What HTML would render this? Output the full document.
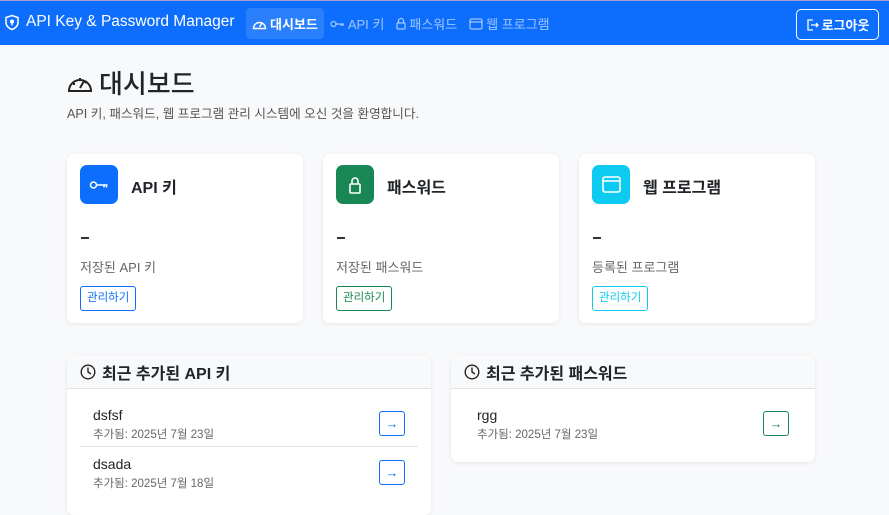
<!DOCTYPE html>
<html><head><meta charset="utf-8">
<style>
*{box-sizing:border-box;margin:0;padding:0}
body{width:889px;height:504px;overflow:hidden;background:#f8f9fa;font-family:"Liberation Sans","Noto Sans CJK KR",sans-serif;color:#212529}
.nav{height:45px;background:#0d6efd;position:relative;color:#fff;border-top:1px solid #a99ad6}
.brand{position:absolute;left:4px;top:12px;font-size:15.5px;display:flex;align-items:center;gap:6px}
.links{position:absolute;left:246px;top:7px;display:flex;font-size:13px}
.links a{display:flex;align-items:center;gap:3px;padding:0 6px;height:31px;color:rgba(255,255,255,.6);text-decoration:none}
.links a.act{background:rgba(255,255,255,.12);color:#fff;font-weight:bold;border-radius:4px;padding:0 6px}
.logout{position:absolute;right:10px;top:8px;width:83px;height:31px;border:1px solid #fff;border-radius:5px;font-size:13px;font-weight:bold;display:flex;align-items:center;justify-content:center;gap:3px}
h1{position:absolute;left:67px;top:64px;font-size:26px;font-weight:500;display:flex;align-items:center;gap:6px}
.sub{position:absolute;left:67px;top:103px;font-size:12.6px;color:#555}
.card{position:absolute;top:154px;width:236px;height:169px;background:#fff;border-radius:7px;box-shadow:0 1px 4px rgba(0,0,0,.08)}
.ic{position:absolute;left:13px;top:11px;width:38px;height:39px;border-radius:7px;display:flex;align-items:center;justify-content:center}
.ct{position:absolute;left:64px;top:20px;font-size:16px;font-weight:bold}
.dash{position:absolute;left:14px;top:83px;width:8px;height:2px;background:#333}
.cl{position:absolute;left:13px;top:103px;font-size:13px;color:#666}
.btn{position:absolute;left:13px;top:132px;height:25px;padding:0 6px;border:1px solid;border-radius:3px;font-size:11.5px;line-height:23px}
.sec{position:absolute;top:355px;width:364px;background:#fff;border-radius:7px;box-shadow:0 1px 4px rgba(0,0,0,.08);overflow:hidden}
.sh{height:34px;background:#f8f9fa;border-bottom:1px solid #dee2e6;font-size:16px;font-weight:bold;display:flex;align-items:center;gap:6px;padding-left:13px}
.it{height:49px;margin:0 13px;position:relative;border-bottom:1px solid #dee2e6}
.it .n{position:absolute;left:13px;top:9px;font-size:14px}
.it .d{position:absolute;left:13px;top:28px;font-size:11.5px;color:#666}
.it .b{position:absolute;right:13px;top:13px;width:26px;height:25px;border:1px solid;border-radius:3px;display:flex;align-items:center;justify-content:center;font-size:13px}
</style></head><body>
<div class="nav">
<div class="brand"><svg width="16" height="17" viewBox="0 0 16 17" fill="none" stroke="#fff" stroke-width="1.5"><path d="M8 1.5L2 3.5v5c0 3.5 3 6 6 7 3-1 6-3.5 6-7v-5z"/><circle cx="8" cy="7.5" r="1.3" fill="#fff"/><path d="M8 8.5v3"/></svg>API Key &amp; Password Manager</div>
<div class="links">
<a class="act"><svg width="15" height="12" viewBox="0 0 15 12" fill="none" stroke="#fff" stroke-width="1.4"><path d="M1.5 10.5a6 6 0 1 1 12 0z"/><path d="M7.5 9l2.5-4"/></svg>대시보드</a>
<a><svg width="15" height="8" viewBox="0 0 15 8" fill="none" stroke="rgba(255,255,255,.6)" stroke-width="1.3"><circle cx="3.5" cy="4" r="2.5"/><path d="M6 4h8M11 4v2M13 4v2"/></svg>API 키</a>
<a><svg width="10" height="13" viewBox="0 0 10 13" fill="none" stroke="rgba(255,255,255,.6)" stroke-width="1.3"><rect x="1" y="6" width="8" height="6" rx="1"/><path d="M2.5 6V4a2.5 2.5 0 0 1 5 0v2"/></svg>패스워드</a>
<a><svg width="14" height="12" viewBox="0 0 14 12" fill="none" stroke="rgba(255,255,255,.6)" stroke-width="1.3"><rect x="1" y="1" width="12" height="10" rx="1.5"/><path d="M1 4h12"/></svg>웹 프로그램</a>
</div>
<div class="logout"><svg width="13" height="12" viewBox="0 0 13 12" fill="none" stroke="#fff" stroke-width="1.3"><path d="M7 1H2v10h5M5 6h7M10 4l2 2-2 2"/></svg>로그아웃</div>
</div>
<h1><svg width="26" height="22" viewBox="0 0 26 22" fill="none" stroke="#222" stroke-width="2"><path d="M2 19a11 11 0 1 1 22 0z"/><path d="M13 16l4-7M6 12h2M13 6v2M19 10l-1 1"/></svg>대시보드</h1>
<div class="sub">API 키, 패스워드, 웹 프로그램 관리 시스템에 오신 것을 환영합니다.</div>

<div class="card" style="left:67px"><div class="ic" style="background:#0d6efd"><svg width="20" height="10" viewBox="0 0 20 10" fill="none" stroke="#fff" stroke-width="1.5"><circle cx="4.5" cy="5" r="3"/><path d="M7.5 5h11M15 5v2.5M17.5 5v2.5"/></svg></div><div class="ct">API 키</div><div class="dash"></div><div class="cl">저장된 API 키</div><div class="btn" style="border-color:#0d6efd;color:#0d6efd">관리하기</div></div>
<div class="card" style="left:323px"><div class="ic" style="background:#198754"><svg width="12" height="18" viewBox="0 0 12 18" fill="none" stroke="#fff" stroke-width="1.6"><rect x="1" y="8" width="10" height="9" rx="1"/><path d="M3 8V5a3 3 0 0 1 6 0v3"/></svg></div><div class="ct">패스워드</div><div class="dash"></div><div class="cl">저장된 패스워드</div><div class="btn" style="border-color:#198754;color:#198754">관리하기</div></div>
<div class="card" style="left:579px"><div class="ic" style="background:#0dcaf0"><svg width="19" height="17" viewBox="0 0 19 17" fill="none" stroke="#fff" stroke-width="1.6"><rect x="1" y="1" width="17" height="15" rx="2"/><path d="M1 5h17"/></svg></div><div class="ct">웹 프로그램</div><div class="dash"></div><div class="cl">등록된 프로그램</div><div class="btn" style="border-color:#0dcaf0;color:#0dcaf0">관리하기</div></div>

<div class="sec" style="left:67px;height:160px"><div class="sh"><svg width="16" height="16" viewBox="0 0 16 16" fill="none" stroke="#222" stroke-width="1.4"><circle cx="8" cy="8" r="6.8"/><path d="M8 3.5V8l3 2"/></svg>최근 추가된 API 키</div>
<div class="it" style="margin-top:9px"><div class="n">dsfsf</div><div class="d">추가됨: 2025년 7월 23일</div><div class="b" style="border-color:#0d6efd;color:#0d6efd">→</div></div>
<div class="it" style="border:none"><div class="n">dsada</div><div class="d">추가됨: 2025년 7월 18일</div><div class="b" style="border-color:#0d6efd;color:#0d6efd">→</div></div>
</div>
<div class="sec" style="left:451px;height:107px"><div class="sh"><svg width="16" height="16" viewBox="0 0 16 16" fill="none" stroke="#222" stroke-width="1.4"><circle cx="8" cy="8" r="6.8"/><path d="M8 3.5V8l3 2"/></svg>최근 추가된 패스워드</div>
<div class="it" style="margin-top:9px;border:none"><div class="n">rgg</div><div class="d">추가됨: 2025년 7월 23일</div><div class="b" style="border-color:#198754;color:#198754">→</div></div>
</div>
</body></html>
